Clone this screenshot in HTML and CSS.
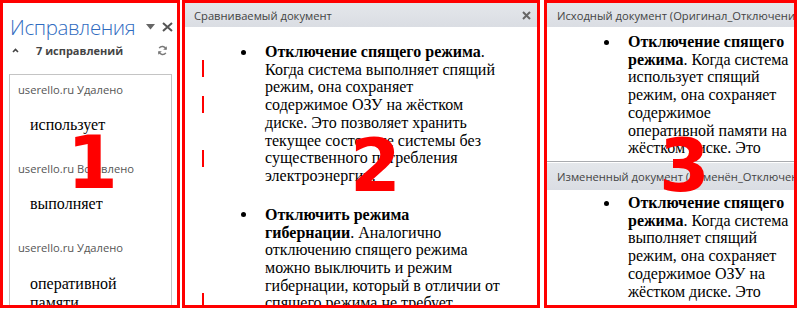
FILE: index.html
```html
<!DOCTYPE html>
<html lang="ru">
<head>
  <meta charset="UTF-8" />
  <title>Сравнение документов</title>
  <link rel="stylesheet" href="styles.css">
</head>
<body>
  <div class="screen">
    <section class="pane pane-revisions">
      <div class="rev-title">
        <span class="rev-title-text">Исправления</span>
        <span class="rev-tools">
          <svg width="9" height="6" viewBox="0 0 9 6"><path d="M0 0h9L4.5 5.5z" fill="#666"/></svg>
          <svg width="11" height="10" viewBox="0 0 11 10"><path d="M1 1l9 8M10 1l-9 8" stroke="#555" stroke-width="2"/></svg>
        </span>
      </div>
      <div class="rev-summary">
        <svg class="caret" width="7" height="5" viewBox="0 0 7 5"><path d="M1 4l2.5-2.5L6 4" fill="none" stroke="#444" stroke-width="1.6"/></svg>
        <span class="rev-count">7 исправлений</span>
        <svg class="refresh" width="11" height="11" viewBox="0 0 11 11">
          <path d="M9 4.2A3.8 3.8 0 0 0 2.2 3.2" fill="none" stroke="#777" stroke-width="1.5"/>
          <path d="M9.8 1.2v3.6H6.2z" fill="#777"/>
          <path d="M2 6.8a3.8 3.8 0 0 0 6.8 1" fill="none" stroke="#777" stroke-width="1.5"/>
          <path d="M1.2 9.8V6.2h3.6z" fill="#777"/>
        </svg>
      </div>
      <div class="rev-list">
        <div class="rev-item">
          <div class="rev-meta">userello.ru Удалено</div>
          <div class="rev-text">использует</div>
        </div>
        <div class="rev-item">
          <div class="rev-meta">userello.ru Вставлено</div>
          <div class="rev-text">выполняет</div>
        </div>
        <div class="rev-item">
          <div class="rev-meta">userello.ru Удалено</div>
          <div class="rev-text">оперативной памяти</div>
        </div>
      </div>
      <span class="marker marker-1">1</span>
    </section>

    <section class="pane pane-compared">
      <div class="doc-header">
        <span class="doc-header-title">Сравниваемый документ</span>
        <svg width="9" height="9" viewBox="0 0 9 9"><path d="M1 1l7 7M8 1L1 8" stroke="#666" stroke-width="2"/></svg>
      </div>
      <div class="doc-body">
        <span class="change-bar" style="top:33px"></span>
        <span class="change-bar" style="top:69px"></span>
        <span class="change-bar" style="top:123px"></span>
        <span class="change-bar" style="top:266px"></span>
        <ul class="doc-list">
          <li><span class="para"><b>Отключение спящего режима</b>. Когда система выполняет спящий режим, она сохраняет содержимое ОЗУ на жёстком диске. Это позволяет хранить текущее состояние системы без существенного потребления электроэнергии.</span></li>
          <li><span class="para"><b>Отключить режима гибернации</b>. Аналогично отключению спящего режима можно выключить и режим гибернации, который в отличии от спящего режима не требует</span></li>
        </ul>
      </div>
      <span class="marker marker-2">2</span>
    </section>

    <section class="pane pane-sources">
      <div class="source source-original">
        <div class="doc-header">
          <span class="doc-header-title">Исходный документ (Оригинал_Отключение спящего режима)</span>
        </div>
        <div class="doc-body">
          <ul class="doc-list">
            <li><span class="para"><b>Отключение спящего режима</b>. Когда система использует спящий режим, она сохраняет содержимое оперативной памяти на жёстком диске. Это позволяет хранить</span></li>
          </ul>
        </div>
      </div>
      <div class="source source-changed">
        <div class="doc-header">
          <span class="doc-header-title">Измененный документ (Изменён_Отключение спящего режима)</span>
        </div>
        <div class="doc-body">
          <ul class="doc-list">
            <li><span class="para"><b>Отключение спящего режима</b>. Когда система выполняет спящий режим, она сохраняет содержимое ОЗУ на жёстком диске. Это позволяет хранить</span></li>
          </ul>
        </div>
      </div>
      <span class="marker marker-3">3</span>
    </section>
  </div>
</body>
</html>
```

FILE: styles.css
```css
:root {
  --mark: #ff0000;
  --ui-text: #444;
}

body {
  margin: 0;
  background: #fff;
  font-family: "Open Sans", "Noto Sans", sans-serif;
  overflow: hidden;
}

.screen {
  display: flex;
  gap: 1px;
  height: 308px;
}

.pane {
  position: relative;
  box-sizing: border-box;
  height: 308px;
  border: 3px solid var(--mark);
  overflow: hidden;
}

.pane-revisions {
  width: 180px;
  padding-top: 10px;
}

.pane-compared {
  width: 358px;
  margin-left: 1px;
}

.pane-sources {
  width: 253px;
  margin-left: 3px;
  display: flex;
  flex-direction: column;
}

/* revisions pane */
.rev-title {
  display: flex;
  align-items: flex-start;
  padding: 0 4px 0 7px;
  height: 28px;
}

.rev-title-text {
  font-size: 20.5px;
  font-weight: 300;
  letter-spacing: -0.4px;
  line-height: 28px;
  color: #2f6bbf;
}

.rev-tools {
  margin-left: auto;
  display: flex;
  align-items: center;
  gap: 7px;
  padding-top: 9px;
}

.rev-summary {
  display: flex;
  align-items: center;
  height: 18px;
  padding: 0 9px 0 9px;
}

.caret {
  margin-right: 17px;
}

.rev-count {
  font-size: 11px;
  font-weight: 700;
  color: var(--ui-text);
}

.refresh {
  margin-left: auto;
}

.rev-list {
  margin: 15px 5px 0 6px;
  border: 1px solid #c4c4c4;
  height: 300px;
  padding: 7px 0 0 8px;
}

.rev-item {
  margin-bottom: 27px;
}

.rev-meta {
  font-size: 11.2px;
  line-height: 16px;
  color: #555;
}

.rev-text {
  margin-top: 17px;
  padding-left: 12px;
  width: 130px;
  font-family: "Liberation Serif", "Times New Roman", serif;
  font-size: 16px;
  line-height: 19px;
  color: #000;
}

.rev-item:last-child .rev-text {
  margin-top: 18px;
}

/* document panes */
.doc-header {
  display: flex;
  align-items: center;
  justify-content: space-between;
  height: 24px;
  padding: 0 6px 0 9px;
  background: linear-gradient(#e4e7eb, #dadde3);
  font-size: 11.2px;
  color: var(--ui-text);
  white-space: nowrap;
  overflow: hidden;
}

.doc-body {
  position: relative;
  padding-top: 16px;
}

.doc-list {
  margin: 0;
  padding: 0 37px 0 56px;
  list-style: none;
  font-family: "Liberation Serif", "Times New Roman", serif;
  font-size: 16px;
  line-height: 17.7px;
  color: #000;
}

.doc-list li {
  display: flex;
  align-items: flex-start;
  margin-bottom: 21.3px;
}

.doc-list li::before {
  content: "";
  flex: none;
  width: 5px;
  height: 5px;
  margin: 6.5px 19px 0 0;
  border-radius: 50%;
  background: #000;
}

.change-bar {
  position: absolute;
  left: 17px;
  width: 2px;
  height: 17px;
  background: var(--mark);
}

/* source panes */
.source-original {
  height: 158px;
  overflow: hidden;
}

.source-changed {
  flex: 1;
  border-top: 1px solid #a9abaf;
  padding-top: 1px;
  overflow: hidden;
}

.source-changed .doc-header {
  height: 27px;
}

.pane-sources .doc-header {
  padding-left: 10px;
}

.pane-sources .doc-list {
  padding: 0 0 0 57px;
}

.source-original .doc-body {
  padding-top: 6px;
}

.source-changed .doc-body {
  padding-top: 4px;
}

/* numbered annotations */
.marker {
  position: absolute;
  font-family: "DejaVu Sans", sans-serif;
  font-weight: 700;
  font-size: 73px;
  line-height: 1;
  color: var(--mark);
}

.marker-1 {
  left: 64px;
  top: 123px;
}

.marker-2 {
  left: 165px;
  top: 126px;
}

.marker-3 {
  left: 112px;
  top: 126px;
}
```
